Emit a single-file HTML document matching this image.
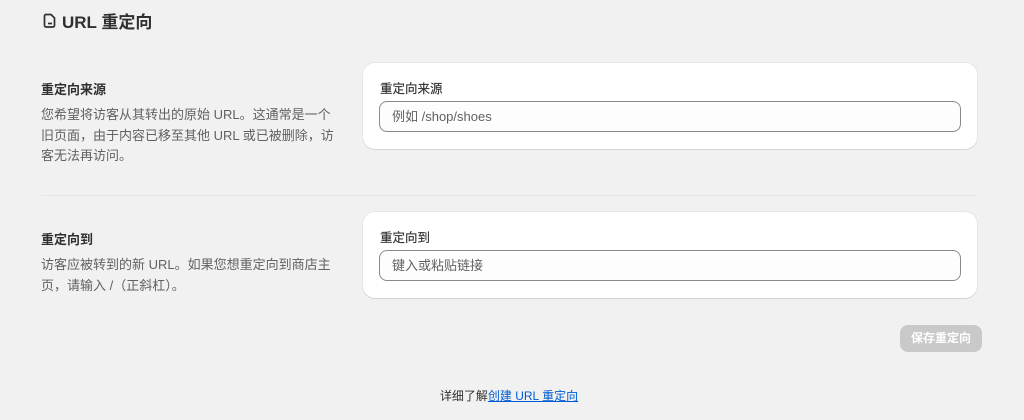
<!DOCTYPE html>
<html><head><meta charset="utf-8"><style>
*{box-sizing:border-box;margin:0;padding:0}
body{width:1024px;height:420px;background:#f1f1f1;font-family:"Liberation Sans","Noto Sans CJK SC",sans-serif;color:#303030;position:relative;overflow:hidden}
.abs{position:absolute}
.title{left:43px;top:8px;font-size:17px;font-weight:700;color:#303030;display:flex;align-items:center;gap:5px;height:24px}
h3{font-size:13px;font-weight:700;color:#303030}
.desc{font-size:13px;line-height:20.5px;color:#616161;white-space:nowrap}
.card{background:#fff;border-radius:12px;box-shadow:0 1px 0 rgba(0,0,0,.08),0 0 0 1px rgba(0,0,0,.04)}
.lbl{font-size:12.5px;color:#303030;position:absolute;left:17px;-webkit-text-stroke:0.15px #303030}
.inp{position:absolute;left:16px;right:16px;height:31px;border:1px solid #8a8a8a;border-radius:8px;background:#fdfdfd;font-size:13px;color:#616161;padding-left:12px;line-height:29px}
.btn{left:900px;top:325px;width:82px;height:27px;background:#c9c9c9;border-radius:8px;color:#fff;font-size:12px;font-weight:700;text-align:center;line-height:27px}
.foot{left:0;width:1018px;top:387px;text-align:center;font-size:12px;color:#303030}
.foot a{color:#005bd3;text-decoration:underline}
</style></head><body>
<div class="abs title"><svg width="14" height="15" viewBox="0 0 14 15"><path d="M3 1.5h5l3.5 3.5v7.5a1.5 1.5 0 0 1-1.5 1.5H3a1.5 1.5 0 0 1-1.5-1.5v-9.5A1.5 1.5 0 0 1 3 1.5z" fill="none" stroke="#303030" stroke-width="1.7"/><path d="M5 10.5h4" stroke="#303030" stroke-width="1.7"/></svg><span>URL 重定向</span></div>

<h3 class="abs" style="left:41px;top:79px">重定向来源</h3>
<div class="abs desc" style="left:41px;top:105px">您希望将访客从其转出的原始 URL。这通常是一个<br>旧页面，由于内容已移至其他 URL 或已被删除，访<br>客无法再访问。</div>
<div class="abs card" style="left:363px;top:63px;width:614px;height:86px">
<div class="lbl" style="top:15px">重定向来源</div>
<div class="inp" style="top:38px">例如 /shop/shoes</div>
</div>

<div class="abs" style="left:41px;top:195px;width:936px;height:1px;background:#e6e6e6"></div>

<h3 class="abs" style="left:41px;top:229px">重定向到</h3>
<div class="abs desc" style="left:41px;top:255px">访客应被转到的新 URL。如果您想重定向到商店主<br>页，请输入 /（正斜杠）。</div>
<div class="abs card" style="left:363px;top:212px;width:614px;height:86px">
<div class="lbl" style="top:15px">重定向到</div>
<div class="inp" style="top:38px">键入或粘贴链接</div>
</div>

<div class="abs btn">保存重定向</div>
<div class="abs foot">详细了解<a>创建 URL 重定向</a></div>
</body></html>
